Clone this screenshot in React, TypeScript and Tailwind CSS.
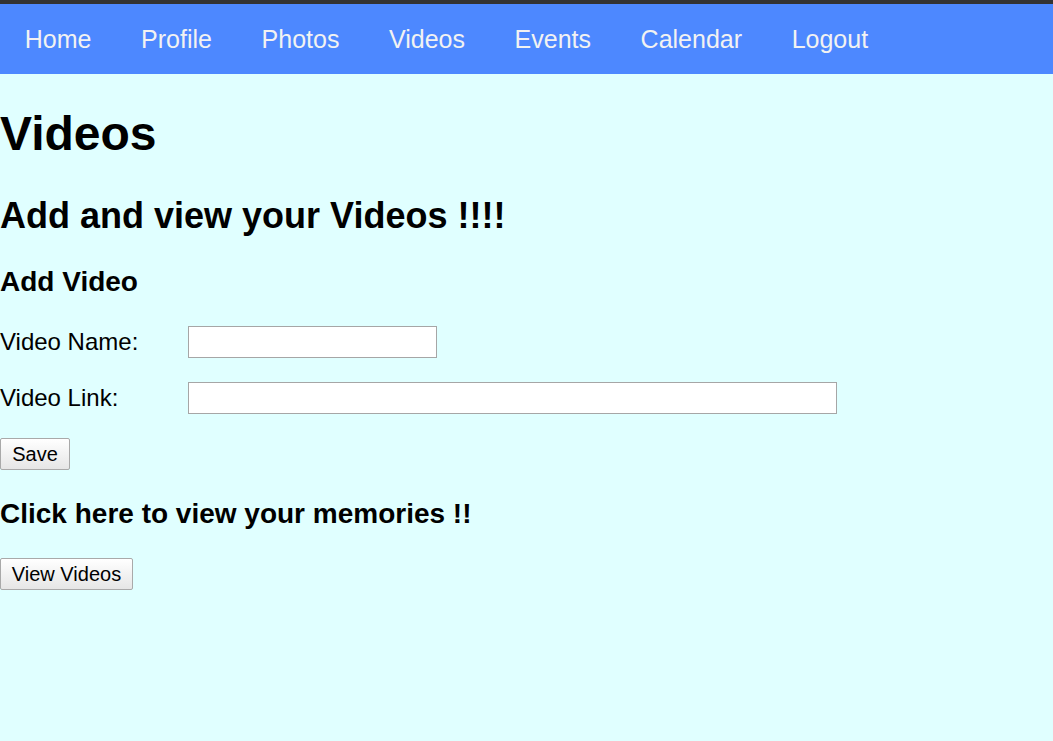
import React from "react";

const NAV_LINKS = ["Home", "Profile", "Photos", "Videos", "Events", "Calendar", "Logout"];

export default function App() {
  return (
    <div
      className="min-h-screen bg-[#e0ffff] text-black"
      style={{ fontFamily: '"Liberation Sans", Arial, sans-serif' }}
    >
      {/* top strip + nav */}
      <div className="h-[4px] bg-[#333333]" />
      <nav className="flex h-[70px] items-center bg-[#4d88ff]">
        {NAV_LINKS.map((link) => (
          <a
            key={link}
            href="#"
            className="px-[24.8px] text-[25px] leading-[30px] text-[#f2f2f2]"
          >
            {link}
          </a>
        ))}
      </nav>

      <h1 className="mt-[32px] text-[48px] font-bold leading-[56px]">Videos</h1>
      <h2 className="mt-[33px] text-[36px] font-bold leading-[42px]">
        Add and view your Videos !!!!
      </h2>
      <h3 className="mt-[29px] text-[28px] font-bold leading-[32px]">Add Video</h3>

      {/* form */}
      <div className="mt-[28px] flex h-[32px] items-center">
        <label className="w-[188px] text-[24px] leading-[32px]">Video Name:</label>
        <input
          type="text"
          className="h-[32px] w-[249px] border border-[#a6a6a6] bg-white px-1 text-[20px] outline-none"
        />
      </div>
      <div className="mt-[24px] flex h-[32px] items-center">
        <label className="w-[188px] text-[24px] leading-[32px]">Video Link:</label>
        <input
          type="text"
          className="h-[32px] w-[649px] border border-[#a6a6a6] bg-white px-1 text-[20px] outline-none"
        />
      </div>
      <div className="mt-[24px]">
        <button className="h-[32px] w-[70px] rounded-[2px] border border-[#a9a9a9] bg-gradient-to-b from-white to-[#e6e6e6] text-[20px] leading-[24px]">
          Save
        </button>
      </div>

      <h3 className="mt-[28px] text-[28px] font-bold leading-[32px]">
        Click here to view your memories !!
      </h3>
      <div className="mt-[28px]">
        <button className="h-[32px] w-[133px] rounded-[2px] border border-[#a9a9a9] bg-gradient-to-b from-white to-[#e6e6e6] text-[20px] leading-[24px]">
          View Videos
        </button>
      </div>
    </div>
  );
}
